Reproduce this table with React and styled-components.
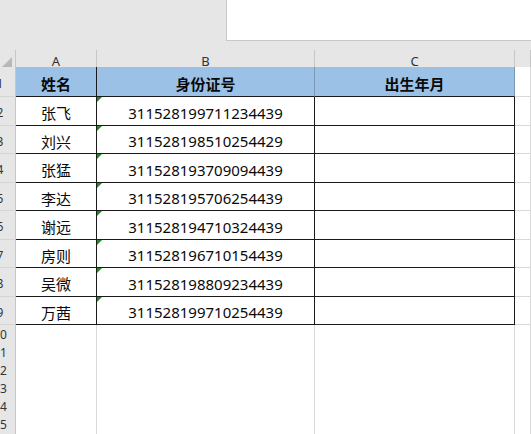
import React from "react"
import styled, { createGlobalStyle } from "styled-components"

const GlobalStyle = createGlobalStyle`
    html, body {
        margin: 0;
        padding: 0;
        background: #ffffff;
        overflow: hidden;
    }
    body {
        font-family: "Noto Sans", "Noto Sans CJK SC", sans-serif;
    }
`

const COLS = '31px 81px 218px 200px 1fr'
const GRID = '#d9d9d9'
const INK = '#1a1a1a'

const people = [
    { name: '张飞', id: '311528199711234439' },
    { name: '刘兴', id: '311528198510254429' },
    { name: '张猛', id: '311528193709094439' },
    { name: '李达', id: '311528195706254439' },
    { name: '谢远', id: '311528194710324439' },
    { name: '房则', id: '311528196710154439' },
    { name: '吴微', id: '311528198809234439' },
    { name: '万茜', id: '311528199710254439' },
]

const Page = styled.div`
    width: 531px;
    height: 434px;
    overflow: hidden;
    background: #e6e6e6;
`

const TopBand = styled.div`
    height: 50px;
    display: flex;
    justify-content: flex-end;
    align-items: flex-start;
`

const FormulaBox = styled.div`
    width: 304px;
    height: 40px;
    background: #ffffff;
    border-left: 1px solid #c8c8c8;
    border-bottom: 1px solid #c8c8c8;
`

const Sheet = styled.div`
    margin-left: -15px;
    width: calc(100% + 15px);
    background: #ffffff;
`

const Row = styled.div`
    display: grid;
    grid-template-columns: ${COLS};
    height: ${props => props.height}px;
`

const HeadCell = styled.div`
    box-sizing: border-box;
    background: #e6e6e6;
    border-right: 1px solid #c6c6c6;
    border-bottom: 1px solid #d0d0d0;
    color: #333;
    font-size: 13px;
    display: flex;
    align-items: center;
    justify-content: center;
    padding-top: 2px;
`

const Corner = styled(HeadCell)`
    justify-content: flex-end;
    align-items: flex-end;
    padding: 0 3px 3px 0;
`

const SelectAll = styled.span`
    width: 0;
    height: 0;
    border-left: 10px solid transparent;
    border-bottom: 10px solid #b8b8b8;
`

const RowNum = styled.div`
    box-sizing: border-box;
    background: #e6e6e6;
    border-right: 1px solid #c6c6c6;
    border-bottom: 1px solid #d4d4d4;
    color: #333;
    font-size: 12px;
    display: flex;
    align-items: center;
    justify-content: center;
    padding-top: ${props => props.$tall ? 3 : 1}px;
`

const Cell = styled.div`
    position: relative;
    box-sizing: border-box;
    background: ${props => props.$fill || '#ffffff'};
    border-right: 1px solid ${props => props.$right || GRID};
    border-bottom: 1px solid ${props => props.$bottom || GRID};
    display: flex;
    align-items: center;
    justify-content: center;
    padding-top: 3px;
    font-size: 15px;
    color: #0a0a0a;
    font-weight: ${props => props.$bold ? 700 : 400};
    font-family: "Noto Sans", "Noto Sans CJK SC", sans-serif;
    white-space: nowrap;
`

const TextFlag = styled.span`
    position: absolute;
    top: 0;
    left: 0;
    width: 0;
    height: 0;
    border-top: 5px solid #1e8c1e;
    border-right: 5px solid transparent;
`

const rowHeights = [29, 28, 29, 28, 29, 28, 29, 28]

const App = () => {
    return (
        <Page>
            <GlobalStyle />
            <TopBand>
                <FormulaBox />
            </TopBand>
            <Sheet>
                <Row height={17}>
                    <Corner><SelectAll /></Corner>
                    <HeadCell>A</HeadCell>
                    <HeadCell>B</HeadCell>
                    <HeadCell>C</HeadCell>
                    <HeadCell />
                </Row>
                <Row height={30}>
                    <RowNum $tall>1</RowNum>
                    <Cell $fill='#9bc2e6' $bold $right={INK} $bottom={INK}>姓名</Cell>
                    <Cell $fill='#9bc2e6' $bold $right='#7d98b3' $bottom={INK}>身份证号</Cell>
                    <Cell $fill='#9bc2e6' $bold $right='#7d98b3' $bottom={INK}>出生年月</Cell>
                    <Cell />
                </Row>
                {people.map((p, i) => (
                    <Row key={p.id} height={rowHeights[i]}>
                        <RowNum $tall>{i + 2}</RowNum>
                        <Cell $right={INK} $bottom={INK}>{p.name}</Cell>
                        <Cell $right={INK} $bottom={INK}>
                            <TextFlag />
                            {p.id}
                        </Cell>
                        <Cell $right={INK} $bottom={INK} />
                        <Cell />
                    </Row>
                ))}
                {[10, 11, 12, 13, 14, 15, 16].map(n => (
                    <Row key={n} height={18}>
                        <RowNum>{n}</RowNum>
                        <Cell />
                        <Cell />
                        <Cell />
                        <Cell />
                    </Row>
                ))}
            </Sheet>
        </Page>
    )
}

export default App
